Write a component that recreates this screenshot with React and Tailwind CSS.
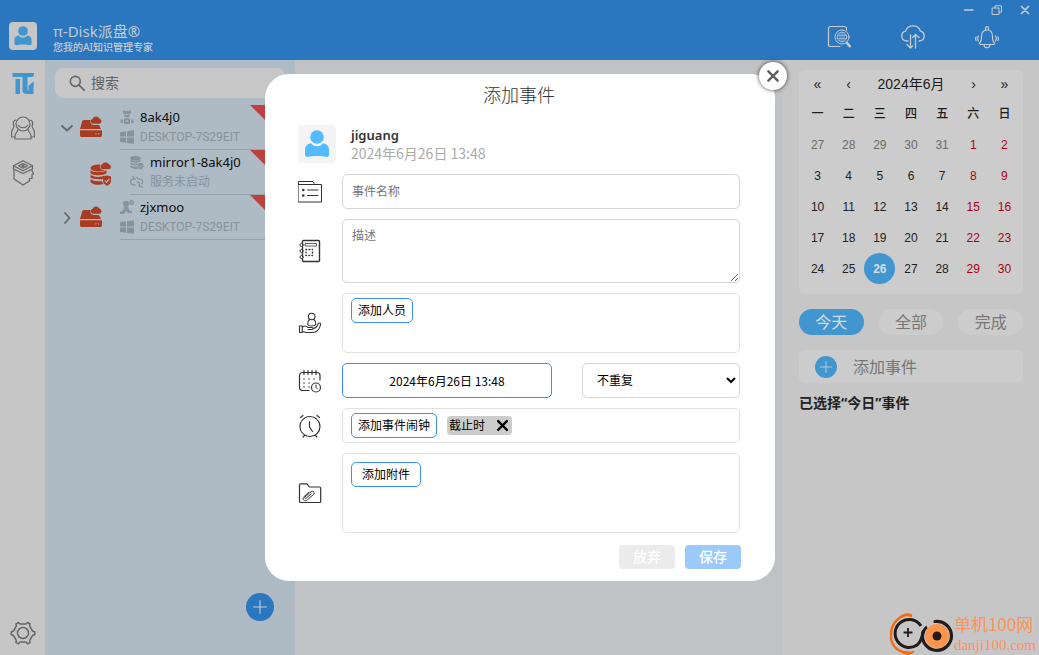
import React from "react";

const line = {
  fill: "none",
  stroke: "currentColor",
  strokeLinecap: "round",
  strokeLinejoin: "round",
};

function Icon({ className = "size-6", children, ...rest }) {
  return (
    <svg viewBox="0 0 24 24" aria-hidden="true" className={`shrink-0 ${className}`} {...line} {...rest}>
      {children}
    </svg>
  );
}

function Person({ className }) {
  return (
    <svg viewBox="0 0 24 28" aria-hidden="true" className={className} fill="currentColor">
      <circle cx="12" cy="7" r="6.8" />
      <path d="M6 13.2C2 13.6 0 16.5 0 20v4.500c0 1.800 1 2.500 2.500 2.500 3-.600 5.500-1 9.500-1s6.500.400 9.500 1c1.500 0 2.500-.700 2.500-2.500V20c0-3.500-2-6.400-6-6.800-1.500 1.800-3.500 3-6 3s-4.500-1.200-6-3z" />
    </svg>
  );
}

const Plus = ({ className }) => (
  <Icon className={className} strokeWidth="1.800">
    <path d="M12 1v22M1 12h22" />
  </Icon>
);

const Cross = ({ className, width }) => (
  <Icon className={className} strokeWidth={width}>
    <path d="M5 5l14 14M19 5L5 19" />
  </Icon>
);

/* ---------- header ---------- */

function Header() {
  return (
    <header className="flex h-[60px] shrink-0 bg-[#2a77bf] text-[#c6cbd0]">
      <div className="flex items-start gap-4 pl-[9px] pt-[22px]">
        <div className="flex size-7 items-center justify-center rounded bg-[#c6c6c6] text-[#4196cf]">
          <Person className="h-5 w-[18px]" />
        </div>
        <div>
          <h1 className="text-[15px] leading-[18px]">π-Disk派盘®</h1>
          <p className="text-[10px] font-medium leading-[14px]">您我的AI知识管理专家</p>
        </div>
      </div>
      <div className="ml-auto flex flex-col items-end">
        <div className="flex h-5 items-center gap-4 pr-2">
          <button type="button" aria-label="最小化" className="size-3">
            <Icon className="size-3" strokeWidth="2.600"><path d="M3 12h17" /></Icon>
          </button>
          <button type="button" aria-label="还原" className="size-3">
            <Icon className="size-3" strokeWidth="2" strokeLinejoin="miter">
              <path d="M3 8h13v13H3zM8 8V3.500h13v13h-5" />
            </Icon>
          </button>
          <button type="button" aria-label="关闭窗口" className="size-3">
            <Cross className="size-3" width="3.500" />
          </button>
        </div>
        <div className="flex gap-[50px] pr-10 pt-[5px]">
          <button type="button" aria-label="查找文件" className="size-6">
            <Icon>
              <path d="M19.500 5V3.500a2 2 0 0 0-2-2H3.500a2 2 0 0 0-2 2v16a2 2 0 0 0 2 2H13" strokeWidth="1.200" />
              <circle cx="15" cy="12" r="7" />
              <circle cx="15" cy="12" r="4.800" strokeWidth=".8" />
              <path d="M13 8v8M15 7.500v9M17 8v8M10.500 10.500h9M10.500 13.500h9" strokeWidth=".6" />
              <path d="M20 18l2.700 3.200" strokeWidth="2.600" />
            </Icon>
          </button>
          <button type="button" aria-label="云端同步" className="size-6">
            <Icon strokeWidth="1.300">
              <path d="M7 16H5.500A5 5 0 0 1 4.500 6.200C5.500 3 8 .8 12 .8s6.500 2.200 7.500 5.400a5 5 0 0 1-1 9.800H18" />
              <path d="M9.500 10v13M6 19.500l3.500 3.500 2-2M14.500 23V9.500M11.500 12.500l3-3 3.500 3" />
            </Icon>
          </button>
          <button type="button" aria-label="通知" className="size-6">
            <Icon strokeWidth="1.200">
              <path d="M4.500 18c2-1.500 2-3 2-6.500 0-4 2-6.500 5.500-6.500s5.500 2.500 5.500 6.500c0 3.500 0 5 2 6.500.500 1-.500 1.500-1.500 1.500H6c-1 0-2-.500-1.500-1.500zM10.500 5V3.500c0-2.400 3-2.400 3 0V5M9 20c.500 3.600 5.500 3.600 6 0" />
              <path d="M3.500 11c-1 1.500-1 3.500 0 5M1.200 12c-.8 1.200-.8 2.500 0 3.600M20.500 11c1 1.500 1 3.500 0 5M22.800 12c.8 1.200.8 2.500 0 3.600" />
            </Icon>
          </button>
        </div>
      </div>
    </header>
  );
}

/* ---------- left rail ---------- */

function Rail() {
  return (
    <nav className="flex w-[45px] shrink-0 flex-col items-center bg-[#c6c6c6] pt-3 pb-2.5 text-[#666]">
      <a href="#home" aria-label="主页" className="text-[#4196cf]">
        <svg viewBox="0 0 22 23" className="h-[23px] w-[22px]" fill="currentColor" aria-hidden="true">
          <path d="M.500 1H22v2.500L20.500 5H.500zM3.500 7H8v15H3.500zM10.500 5h5v12c0 1 .5 1.500 1 1.500V14l5-3.500V22h-7c-2.500 0-4-1.500-4-4z" />
          <path d="M16.500 14l5-4.500V14z" />
        </svg>
      </a>
      <a href="#contacts" aria-label="联系人" className="mt-[21px]">
        <Icon strokeWidth="1.200">
          <circle cx="12" cy="8" r="7" />
          <path d="M7.500 9.500c2 3 7 3 9 0M7 13.500c-.5 2.500-3 4-3 6.500V23h16v-3c0-2.500-2.500-4-3-6.500M5 4C2.500 4.500 1.500 7 3 10c-.5 3-2.500 4-2.500 7v4H4M19 4c2.500.5 3.500 3 2 6 .5 3 2.500 4 2.500 7v4H20" />
        </Icon>
      </a>
      <a href="#ai" aria-label="知识" className="mt-5">
        <svg viewBox="0 0 24 26" className="h-[26px] w-6" {...line} strokeWidth="1.200" aria-hidden="true">
          <path d="M12 .8l9.500 5-9.500 5-9.500-5zM12 3.500l4.500 2.300-4.500 2.400-4.500-2.400z" />
          <circle cx="12" cy="5.800" r="1" />
          <path d="M3 9v10l9 6 6.500-4v-2.500h2.500v-4l1.500-.500L21 10.500V9M2.500 6v3l9.500 4.500L21.500 9V6" />
        </svg>
      </a>
      <a href="#settings" aria-label="设置" className="mt-auto">
        <svg viewBox="0 0 26 24" className="h-6 w-[26px]" {...line} strokeWidth="1.500" aria-hidden="true">
          <circle cx="13" cy="12" r="5.500" />
          <path d="M8.500 1.500l1.500 1.500h6l1.500-1.500 2.500 1.500-.3 2.200 2.800 4.800 2.300 1v2.500l-2.300 1-2.800 4.800.3 2.200-2.500 1.300-1.500-1.800h-6l-1.500 1.800L6 21.500l.3-2.200L3.500 14.500l-2.300-1V11l2.300-1 2.800-4.800L6 3z" />
        </svg>
      </a>
    </nav>
  );
}

/* ---------- device tree ---------- */

function DriveIcon() {
  return (
    <svg viewBox="0 0 22 22" className="size-[22px] text-[#a83b20]" fill="currentColor" aria-hidden="true">
      <path d="M4 4h6.500c-.5 4 1.500 5 4 5H19l2 4H0L2 6c.3-1.300 1-2 2-2z" />
      <path d="M0 14.200h22V19c0 1.500-.5 2-2 2H2c-1.500 0-2-.5-2-2z" />
      <path d="M13 7.800a2.600 2.600 0 0 1-.3-5.100A3.700 3.700 0 0 1 19.300 2.500a2.700 2.700 0 0 1 0 5.300z" />
      <path d="M15.500 17.800h1M18.200 17.800h1" stroke="#aebac4" strokeWidth="1.200" />
    </svg>
  );
}

function DatabaseIcon({ className, cloud }) {
  return (
    <svg viewBox="0 0 22 24" className={className} fill="currentColor" aria-hidden="true">
      <ellipse cx="8.500" cy="6" rx="8" ry="3.500" />
      <path d="M.500 8c2 3 13 3 16 0v3c-3 3-14 3-16 0zM.500 12.500c2 3 11 3 14 1l-2 3.500c-4 .5-10.500 0-12-1.500zM.500 17c2 2 7 2.500 11 2l2 3c-4 1.500-11 1-13-2z" />
      <path d="M13 14.500l4-1 4 1v4c0 2.500-1.500 4-4 5.500-2.500-1.500-4-3-4-5.500z" />
      <path d="M15 18.500l1.500 1.800 2.800-3.300" fill="none" stroke="#aebac4" strokeWidth="1.200" />
      {cloud && (
        <path d="M12 7.500a2.800 2.800 0 0 1 0-5.300A4 4 0 0 1 19 2a2.900 2.900 0 0 1 .5 5.500z" stroke="#aebac4" strokeWidth=".8" />
      )}
    </svg>
  );
}

function UserMini() {
  return (
    <svg viewBox="0 0 14 14" className="size-3.5" fill="currentColor" aria-hidden="true">
      <path d="M3 0l2 1h4l2-1v3.500H9.500v1h-2v-1h-1v1h-2v-1H3zM4 5h6c0 1.600-1 2.500-3 2.500S4 6.600 4 5zM4 8.500h6V14H4zM.500 9.500h2.300v3.500H.500zM11.200 9.500h2.300v3.500h-2.300z" />
      <path d="M6 11h2" stroke="#aebac4" strokeWidth="1.400" />
    </svg>
  );
}

function RobotMini() {
  return (
    <svg viewBox="0 0 14 14" className="size-3.5" fill="currentColor" aria-hidden="true">
      <circle cx="6" cy="3.800" r="3" />
      <path d="M4 6.500h4l1 3.500 3 1.500V13H8l-2-2-2 3H0v-2l3.500-2z" />
      <circle cx="11.500" cy="2.500" r="2.500" />
      <path d="M10.300 1.300l2.400 2.400M12.700 1.300l-2.400 2.400" stroke="#aebac4" strokeWidth=".6" />
    </svg>
  );
}

function WindowsMini() {
  return (
    <svg viewBox="0 0 14 14" className="size-3.5" fill="currentColor" aria-hidden="true">
      <path d="M0 2.200l6-.9v5.300H0zM7 1.200L14 .2v6.400H7zM0 7.600h6v5.200l-6-.9zM7 7.600h7v6.200l-7-.9z" />
    </svg>
  );
}

function UnlinkMini() {
  return (
    <Icon className="size-3.5" strokeWidth="2.200">
      <path d="M9 17H6a5 5 0 0 1 0-10h3M12 4l2 3h3a4.500 4.500 0 0 1 3 8M12 12l4 1v6l5 2M5 3l2 2" />
    </Icon>
  );
}

const devices = [
  { name: "8ak4j0", host: "DESKTOP-7S29EIT", toggle: "open", icon: <UserMini />, sub: <WindowsMini /> },
  { name: "mirror1-8ak4j0", host: "服务未启动", child: true, icon: <DatabaseIcon className="h-4 w-3.5" />, sub: <UnlinkMini /> },
  { name: "zjxmoo", host: "DESKTOP-7S29EIT", toggle: "closed", icon: <RobotMini />, sub: <WindowsMini /> },
];

function DeviceRow({ item }) {
  return (
    <li className="relative flex h-[45px]">
      <div className={item.child ? "w-[45px]" : "flex w-[35px] items-center justify-center pl-2"}>
        {item.toggle && (
          <button type="button" aria-label={item.toggle === "open" ? "收起" : "展开"} className="size-3 text-[#666]">
            <Icon className="size-3" strokeWidth="3.400" strokeLinecap="butt" strokeLinejoin="miter">
              <path d={item.toggle === "open" ? "M1 7l11 10L23 7" : "M7 1l10 11L7 23"} />
            </Icon>
          </button>
        )}
      </div>
      <div className={item.child ? "flex w-10 items-start pt-3" : "flex w-10 items-start pt-[11px]"}>
        {item.child ? <DatabaseIcon cloud className="h-6 w-[22px] text-[#a83b20]" /> : <DriveIcon />}
      </div>
      <div className="min-w-0 flex-1 border-b border-[#98a2ab] pt-[3px] text-[#87929b]">
        <div className="flex items-center gap-1.5">
          {item.icon}
          <span className="text-[13px] leading-[18px] whitespace-nowrap text-[#0c0c0c]">{item.name}</span>
        </div>
        <div className="flex items-center gap-1.5 pt-px">
          {item.sub}
          <span className="font-[Roboto,'Noto_Sans_CJK_SC',sans-serif] text-xs leading-5 whitespace-nowrap">{item.host}</span>
        </div>
      </div>
      <svg viewBox="0 0 35 35" className="absolute right-0 top-0 size-[35px] text-[#c04040]" fill="currentColor" aria-hidden="true">
        <path d="M0 0h35v35z" />
      </svg>
    </li>
  );
}

function Sidebar() {
  return (
    <aside className="flex w-[250px] shrink-0 flex-col bg-[#aebac4] px-2.5 pt-2 pb-[34px]">
      <label className="flex h-[30px] items-center gap-1.5 rounded-lg bg-[#c7c7c7] pl-3.5 text-[#666]">
        <Icon className="size-4" strokeWidth="2.400">
          <circle cx="9.500" cy="9.500" r="7.500" />
          <path d="M15.500 15.500L23 23" />
        </Icon>
        <input
          type="search"
          aria-label="搜索"
          placeholder="搜索"
          className="w-full min-w-0 bg-transparent text-sm outline-none placeholder:text-[#606060]"
        />
      </label>
      <ul className="-mx-2.5 mt-[7px] pr-2.5">
        {devices.map((d) => (
          <DeviceRow key={d.name} item={d} />
        ))}
      </ul>
      <button
        type="button"
        aria-label="新建"
        className="mt-auto mr-[11px] flex size-7 items-center justify-center self-end rounded-full bg-[#2a77bf] text-[#c9ced3]"
      >
        <Plus className="size-3.5" />
      </button>
    </aside>
  );
}

/* ---------- calendar panel ---------- */

const weekdays = ["一", "二", "三", "四", "五", "六", "日"];
const weeks = [
  [27, 28, 29, 30, 31, 1, 2],
  [3, 4, 5, 6, 7, 8, 9],
  [10, 11, 12, 13, 14, 15, 16],
  [17, 18, 19, 20, 21, 22, 23],
  [24, 25, 26, 27, 28, 29, 30],
];

function dayColor(day, week, col) {
  if (week === 0 && day > 7) return "text-[#6b6b6b]";
  if (day === 26) return "rounded-full bg-[#4196cf] text-[#d6dde2] font-bold";
  return col > 4 ? "text-[#ab0018]" : "text-[#222]";
}

function Calendar() {
  return (
    <section className="rounded-md bg-[#ccc] px-[3px] pb-2.5 font-['Liberation_Sans','Noto_Sans_CJK_SC',sans-serif] text-[#1c1c1c]">
      <div className="flex h-7 items-center text-sm">
        <button type="button" aria-label="上一年" className="w-[31px]">«</button>
        <button type="button" aria-label="上个月" className="w-[31px]">‹</button>
        <span className="flex-1 text-center">2024年6月</span>
        <button type="button" aria-label="下个月" className="w-[31px]">›</button>
        <button type="button" aria-label="下一年" className="w-[31px]">»</button>
      </div>
      <table className="w-full table-fixed border-collapse text-center text-xs">
        <thead>
          <tr className="h-[31px]">
            {weekdays.map((d) => (
              <th key={d} scope="col" className="p-0 font-medium">{d}</th>
            ))}
          </tr>
        </thead>
        <tbody>
          {weeks.map((days, w) => (
            <tr key={w}>
              {days.map((d, c) => (
                <td key={c} className="p-0">
                  <button type="button" className={`size-[31px] align-top ${dayColor(d, w, c)}`}>{d}</button>
                </td>
              ))}
            </tr>
          ))}
        </tbody>
      </table>
    </section>
  );
}

function RightPanel() {
  return (
    <aside className="w-64 shrink-0 bg-[#c6c6c6] px-4 pt-2.5">
      <Calendar />
      <div className="mt-[15px] flex gap-[15px] text-base leading-[26px]">
        <button type="button" className="flex-1 rounded-full bg-[#4196cf] text-[#d6dde2]">今天</button>
        <button type="button" className="flex-1 rounded-full bg-[#ccc] text-[#777]">全部</button>
        <button type="button" className="flex-1 rounded-full bg-[#ccc] text-[#777]">完成</button>
      </div>
      <button type="button" className="mt-[15px] flex h-[33px] w-full items-center gap-4 rounded-md bg-[#ccc] pl-4 text-base leading-6 text-[#777]">
        <span className="flex size-[22px] items-center justify-center rounded-full bg-[#4196cf] text-[#c9ced3]">
          <Plus className="size-3" />
        </span>
        添加事件
      </button>
      <h2 className="mt-2.5 text-sm font-bold text-[#222]">已选择“今日”事件</h2>
    </aside>
  );
}

/* ---------- dialog ---------- */

const FolderListIcon = () => (
  <Icon>
    <path d="M.500 4.500h23v17.500H.500zM.500 4.500V1.500h13.500c1.500 0 2 1.500 2.500 3M9.500 10h10.500M9.500 15.500h10.500" />
    <path d="M5.300 10h.010M5.300 15.500h.010" strokeWidth="2.600" />
  </Icon>
);

const NotebookIcon = () => (
  <Icon>
    <rect x="4.500" y="1.500" width="17" height="21" rx="1" strokeWidth="1.400" />
    <path d="M7.500 4.500h11v2.500h-11z" strokeWidth=".8" />
    <path d="M8 10.500h6.500v6H8z" strokeDasharray=".6 2.500" strokeWidth="1.500" />
    <circle cx="3.500" cy="6" r="1.500" fill="#fff" />
    <circle cx="3.500" cy="12" r="1.500" fill="#fff" />
    <circle cx="3.500" cy="18" r="1.500" fill="#fff" />
  </Icon>
);

const HandPersonIcon = () => (
  <Icon strokeWidth="1.100">
    <circle cx="13.700" cy="5.500" r="3.300" />
    <path d="M11.500 8.500c-1.500 1.200-2 3.200-1.800 5 1 2 7 2 8 0 .2-1.800-.3-3.800-1.800-5" />
    <path d="M1.500 15h2.800v6.500H1.500zM4.500 16c2-1.500 4-1 5.500.500h4c1.500 0 1.500 2 0 2h-4M15 17.500c2 0 4-1.500 5-4.500.8-1.500 3-1.200 2.600.5C21.500 19 18 21.500 14 21.500H8L4.500 20.500" />
  </Icon>
);

const CalendarClockIcon = () => (
  <Icon>
    <path d="M11 21.500H4.500a3 3 0 0 1-3-3v-12a3 3 0 0 1 3-3H19a3 3 0 0 1 3 3V11M6 1.500v4M10 1.500v4M14 1.500v4M18 1.500v4" strokeWidth="1.200" />
    <path d="M6 10h.010M11 10h.010M16 10h.010M6 14h.010M11 14h.010M6 18h.010M11 18h.010" strokeWidth="1.500" />
    <circle cx="18" cy="18.500" r="4.500" strokeWidth="1.200" />
    <path d="M18 16v2.500l1.500 1.500" />
  </Icon>
);

const AlarmIcon = () => (
  <Icon strokeWidth="1.200">
    <circle cx="12" cy="12.500" r="10" strokeDasharray="17 1.500" />
    <path d="M11.500 7.500v5.500l3 4.500M2.500 3.500L5 1.500M21.500 3.500L19 1.500M6.500 21.500l-1.500 1.500M17.500 21.500l1.500 1.500" />
  </Icon>
);

const FolderClipIcon = () => (
  <Icon strokeWidth="1.200">
    <path d="M1.500 20.500V4c0-.8.400-1.200 1.200-1.200H9L11.500 6h10c.8 0 1.200.4 1.200 1.200v13.300c0 .6-.4 1-1 1H2.500c-.6 0-1-.4-1-1z" />
    <path d="M13 13l-5 4.300c-.8.700-1.900-.400-1.100-1.200l6-5.300c2-1.700 4.500.700 2.500 2.700l-6.200 5.500c-2.600 2.200-5.700-1-3.200-3.400l5-4.600" strokeWidth="1" />
  </Icon>
);

function Row({ icon, children }) {
  return (
    <div className="flex items-center gap-5">
      {icon}
      <div className="flex min-w-0 flex-1">{children}</div>
    </div>
  );
}

const field = "w-full rounded-[5px] border border-[#d6d6d6]";
const box = "flex w-full items-start rounded-[5px] border border-[#e2e2e2] px-2";
const chip = "h-[25px] rounded-[5px] border border-[#3a93e8] bg-white text-xs text-black";

function EventDialog() {
  return (
    <div className="absolute inset-0 flex items-center justify-center pl-px">
      <form
        role="dialog"
        aria-labelledby="dialog-title"
        className="relative w-[510px] max-w-full rounded-3xl bg-white pr-[35px] pb-3 pl-[33px] text-[#333]"
      >
        <h2 id="dialog-title" className="h-[51px] pt-2 text-center text-lg leading-[26px] font-light">添加事件</h2>
        <button
          type="button"
          aria-label="关闭"
          className="absolute -top-3 -right-3 flex size-7 items-center justify-center rounded-full bg-white text-[#606060] shadow-[0_0_4px_rgba(0,0,0,0.7)]"
        >
          <Cross className="size-4" width="3.600" />
        </button>

        <div className="mb-[11px] flex items-center gap-[15px]">
          <div className="flex size-[38px] items-center justify-center rounded bg-[#f4f4f4] text-[#53bbff]">
            <Person className="h-7 w-6" />
          </div>
          <div>
            <p className="text-[13px] leading-[18px] font-semibold">jiguang</p>
            <p className="font-['Noto_Sans_CJK_SC',sans-serif] text-sm leading-[18px] text-[#aaa]">2024年6月26日 13:48</p>
          </div>
        </div>

        <div className="flex flex-col gap-2.5">
          <Row icon={<FolderListIcon />}>
            <input
              type="text"
              aria-label="事件名称"
              placeholder="事件名称"
              className={`${field} h-[35px] px-[9px] text-xs placeholder:text-[#757575]`}
            />
          </Row>
          <Row icon={<NotebookIcon />}>
            <textarea
              aria-label="描述"
              placeholder="描述"
              className={`${field} h-16 resize px-[9px] py-2 text-xs placeholder:text-[#757575]`}
            />
          </Row>
          <Row icon={<HandPersonIcon />}>
            <div className={`${box} h-[60px] pt-1`}>
              <button type="button" className={`${chip} px-1.5`}>添加人员</button>
            </div>
          </Row>
          <Row icon={<CalendarClockIcon />}>
            <div className="flex w-full gap-[30px]">
              <button
                type="button"
                className="h-[35px] flex-1 rounded-[5px] border border-[#3a93e8] font-['Noto_Sans_CJK_SC',sans-serif] text-xs text-black"
              >
                2024年6月26日 13:48
              </button>
              <select aria-label="重复" className="h-[35px] w-[158px] rounded-[5px] border border-[#d6d6d6] bg-white pl-2.5 text-xs text-black">
                <option>不重复</option>
              </select>
            </div>
          </Row>
          <Row icon={<AlarmIcon />}>
            <div className={`${box} h-[35px] gap-2.5 pt-1`}>
              <button type="button" className={`${chip} px-1.5`}>添加事件闹钟</button>
              <span className="mt-[3px] flex h-[19px] items-center gap-2.5 rounded bg-[#ccc] px-0.5 text-xs text-black">
                截止时
                <button type="button" aria-label="移除截止时" className="size-[15px]">
                  <Cross className="size-[15px]" width="3.800" />
                </button>
              </span>
            </div>
          </Row>
          <Row icon={<FolderClipIcon />}>
            <div className={`${box} h-20 pt-2`}>
              <button type="button" className={`${chip} px-2.5`}>添加附件</button>
            </div>
          </Row>
        </div>

        <div className="mt-3 -mr-px flex justify-end gap-2.5 text-sm leading-6 font-medium text-white">
          <button type="button" className="w-14 rounded-sm bg-[#ebebeb]">放弃</button>
          <button type="submit" className="w-14 rounded-sm bg-[#9bcaf8]">保存</button>
        </div>
      </form>
    </div>
  );
}

function Watermark() {
  return (
    <div className="absolute right-[3px] bottom-0 flex h-[42px] items-start text-[#fb935a]">
      <svg viewBox="0 0 64 42" className="h-[42px] w-16" fill="none" aria-hidden="true">
        <path d="M22 2.500C14 0 10 4 6 8-1 16-1 30 7 36c4 2 6 5 13 5" stroke="#f96a10" strokeWidth="2.400" />
        <path d="M10 5c3-4 9-6 12-3v2c-4-1-8-1-12 1zM10 37c4 1 9 2 15 1-2 4-9 5-15-1z" fill="#f96a10" />
        <path d="M31 13A14 14 0 1 0 27 32c4-3 5-8 6-12 1-3 2-5 4-6" stroke="#231a1a" strokeWidth="3" />
        <path d="M18 15v9M13.500 19.500h9" stroke="#231a1a" strokeWidth="1.800" />
        <circle cx="47" cy="23" r="12" fill="#ff944d" />
        <path d="M45 8.500A14.500 14.500 0 1 1 33 19" stroke="#231a1a" strokeWidth="3.200" strokeLinecap="round" />
        <circle cx="47" cy="23" r="4.500" fill="#231a1a" />
      </svg>
      <div>
        <p className="font-['Noto_Sans_CJK_SC',sans-serif] text-[17px] leading-[22px]">单机100网</p>
        <p className="font-['Liberation_Serif',serif] text-[15px] leading-5">danji100.com</p>
      </div>
    </div>
  );
}

export default function App() {
  return (
    <div className="relative flex min-h-screen flex-col overflow-hidden font-['Noto_Sans','Noto_Sans_CJK_SC',sans-serif]">
      <Header />
      <div className="flex flex-1">
        <Rail />
        <Sidebar />
        <main className="min-w-0 flex-1 bg-[#c1c2c4]" />
        <RightPanel />
      </div>
      <EventDialog />
      <Watermark />
    </div>
  );
}
